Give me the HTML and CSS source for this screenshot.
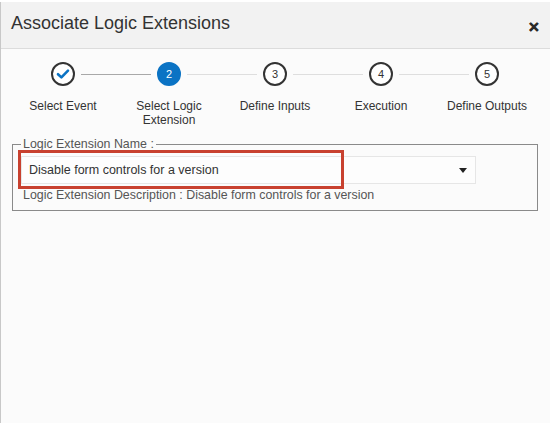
FILE: index.html
```html
<!DOCTYPE html>
<html>
<head>
<meta charset="utf-8">
<link rel="stylesheet" href="styles.css">
</head>
<body>
<div class="dialog">
  <div class="header">
    <span class="title">Associate Logic Extensions</span>
    <span class="close">&#x2715;</span>
  </div>
  <div class="content">
    <div class="stepper">
      <div class="circle done">
        <svg width="14" height="12" viewBox="0 0 14 12"><path d="M2 6.2 L5.4 9.4 L12 2.6" fill="none" stroke="#0b73c4" stroke-width="2.6" stroke-linecap="round" stroke-linejoin="round"/></svg>
      </div>
      <div class="line dark"></div>
      <div class="circle active">2</div>
      <div class="line"></div>
      <div class="circle">3</div>
      <div class="line"></div>
      <div class="circle">4</div>
      <div class="line"></div>
      <div class="circle">5</div>
    </div>
    <div class="labels">
      <div class="label">Select Event</div>
      <div class="label">Select Logic<br>Extension</div>
      <div class="label">Define Inputs</div>
      <div class="label">Execution</div>
      <div class="label">Define Outputs</div>
    </div>
    <fieldset class="group">
      <legend>Logic Extension Name :</legend>
      <div class="select-wrap">
        <div class="select">
          <span>Disable form controls for a version</span>
          <span class="caret"></span>
        </div>
        <div class="highlight"></div>
      </div>
      <div class="desc">Logic Extension Description : Disable form controls for a version</div>
    </fieldset>
  </div>
</div>
</body>
</html>
```

FILE: styles.css
```css
html, body {
  margin: 0;
  padding: 0;
  background: #ffffff;
}
body {
  font-family: "Liberation Sans", Arial, sans-serif;
  color: #333;
  padding-top: 2px;
}
.dialog {
  width: 549px;
  height: 421px;
  border-left: 1px solid #c8c8c8;
  background: #fbfbfb;
  display: flex;
  flex-direction: column;
}
.header {
  height: 46px;
  background: #f2f2f2;
  border-bottom: 1px solid #dcdcdc;
  display: flex;
  align-items: center;
  justify-content: space-between;
  padding: 0 10px 0 10px;
}
.title {
  font-size: 18px;
  color: #333;
  margin-top: -3px;
}
.close {
  font-size: 14px;
  font-weight: bold;
  color: #2a2a2a;
  margin-top: 3px;
  -webkit-text-stroke: 0.4px #2a2a2a;
}
.content {
  padding-top: 13px;
}
.stepper {
  display: flex;
  align-items: center;
  margin-left: 50px;
  width: 448px;
}
.circle {
  width: 20px;
  height: 20px;
  border: 2px solid #333;
  border-radius: 50%;
  background: #fff;
  display: flex;
  align-items: center;
  justify-content: center;
  font-size: 11px;
  color: #333;
  flex: none;
}
.circle.active {
  background: #0b73c4;
  border-color: #0b73c4;
  color: #fff;
}
.line {
  flex: 1;
  height: 1px;
  background: #dedede;
  margin: 0 6px;
}
.line.dark {
  background: #a8a8a8;
}
.labels {
  display: grid;
  grid-template-columns: repeat(5, 106px);
  margin-left: 9px;
  margin-top: 13px;
}
.label {
  text-align: center;
  font-size: 12px;
  line-height: 14px;
  color: #333;
}
.group {
  margin: 10px 12px 0 11px;
  padding: 5px 8px 8px 8px;
  border: 1px solid #8a8a8a;
  min-width: 0;
}
.group legend {
  padding: 0 2px;
  font-size: 12.4px;
  line-height: 14px;
  color: #555;
}
.select-wrap {
  position: relative;
  width: 455px;
}
.select {
  height: 26px;
  border: 1px solid #e6e6e6;
  background: #fdfdfd;
  display: flex;
  align-items: center;
  justify-content: space-between;
  padding: 0 8px 0 7px;
  font-size: 12.5px;
  color: #333;
}
.caret {
  width: 0;
  height: 0;
  border-left: 4px solid transparent;
  border-right: 4px solid transparent;
  border-top: 5px solid #222;
}
.highlight {
  position: absolute;
  left: -3px;
  top: -6px;
  width: 326px;
  height: 39px;
  box-sizing: border-box;
  border: 3px solid #c8412f;
}
.desc {
  margin-top: 4px;
  font-size: 12.4px;
  line-height: 14px;
  color: #555;
  padding-left: 2px;
}
```
